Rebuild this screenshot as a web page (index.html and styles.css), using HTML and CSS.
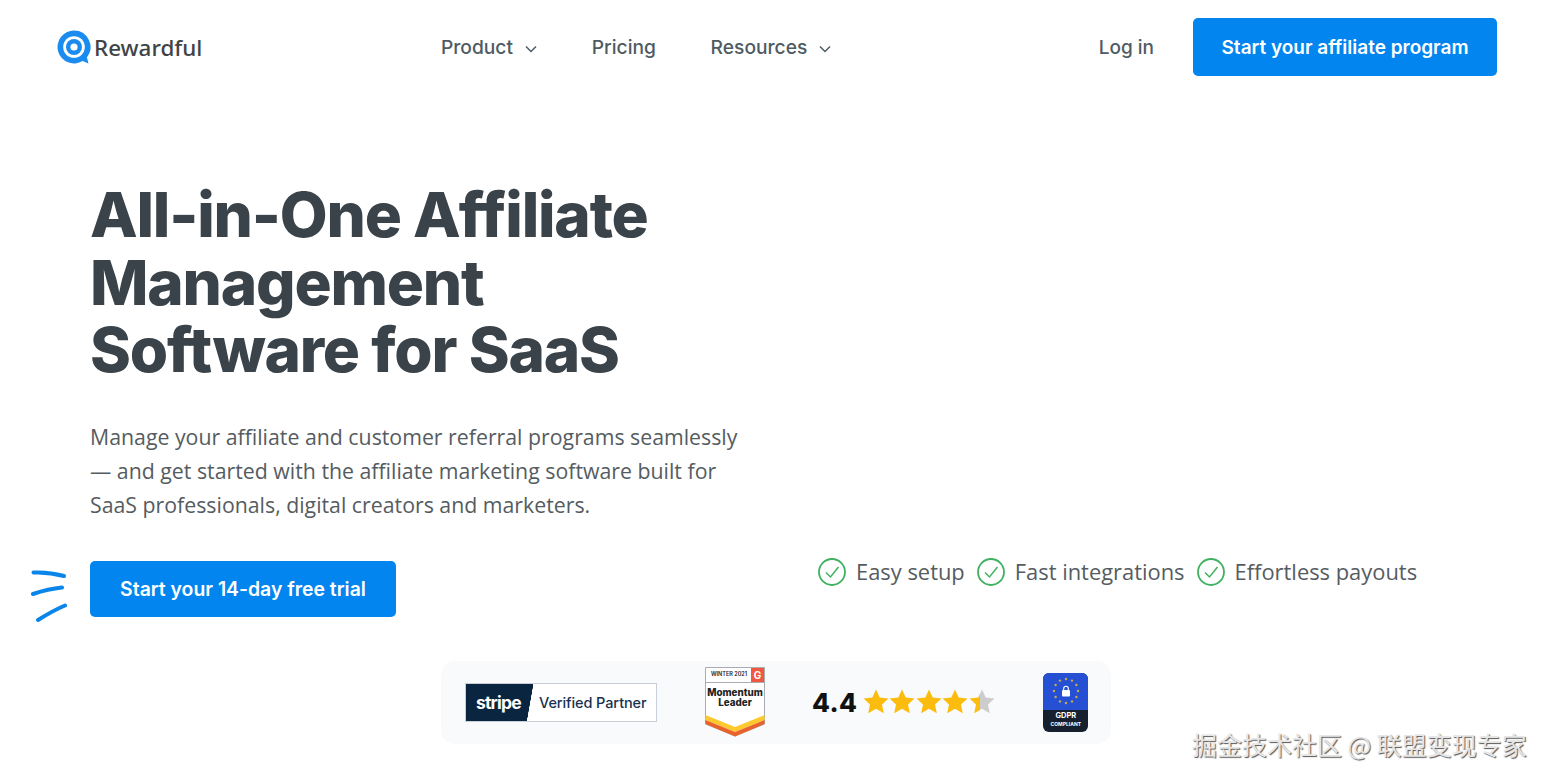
FILE: index.html

```html
<!DOCTYPE html>
<html lang="en">
<head>
  <meta charset="UTF-8" />
  <meta name="viewport" content="width=device-width, initial-scale=1.0" />
  <title>Rewardful</title>
  <link rel="stylesheet" href="styles.css">
</head>
<body>
  <header class="topbar">
    <a class="logo" href="#">
      <svg class="logo-mark" viewBox="0 0 34 34" width="34" height="34">
        <path d="M17 .5a16.5 16.5 0 1 0 8.6 30.6l5.9 2.4-1.6-6.3A16.5 16.5 0 0 0 17 .5z" fill="#1a8cf0"/>
        <circle cx="17" cy="17" r="10.8" fill="#fff"/>
        <circle cx="17" cy="17" r="8" fill="#1a8cf0"/>
        <circle cx="17" cy="17" r="3.6" fill="#fff"/>
      </svg>
      <span>Rewardful</span>
    </a>
    <nav class="mainnav">
      <a href="#">Product <svg class="chev" viewBox="0 0 12 8" width="12" height="8"><path d="M1 1.5l5 5 5-5" fill="none" stroke="#4f5b62" stroke-width="1.5"/></svg></a>
      <a href="#">Pricing</a>
      <a href="#">Resources <svg class="chev" viewBox="0 0 12 8" width="12" height="8"><path d="M1 1.5l5 5 5-5" fill="none" stroke="#4f5b62" stroke-width="1.5"/></svg></a>
    </nav>
    <div class="topbar-right">
      <a class="login" href="#">Log in</a>
      <a class="btn btn-top" href="#">Start your affiliate program</a>
    </div>
  </header>

  <main>
    <section class="hero">
      <h1>All-in-One Affiliate<br>Management<br>Software for SaaS</h1>
      <p class="lead">Manage your affiliate and customer referral programs seamlessly — and get started with the affiliate marketing software built for SaaS professionals, digital creators and marketers.</p>
      <div class="cta-row">
        <div class="cta">
          <svg class="scribble" viewBox="0 0 36 54" width="36" height="54">
            <path d="M2.5 3.5C12 3 24 4.500 33 7M2 25C11 22 21 19.500 31 18.500M7 51C15 46 23 41 34 36.500" fill="none" stroke="#0a85ea" stroke-width="4" stroke-linecap="round"/>
          </svg>
          <a class="btn btn-trial" href="#">Start your 14-day free trial</a>
        </div>
        <ul class="perks">
          <li><svg viewBox="0 0 28 28" width="28" height="28"><circle cx="14" cy="14" r="13" fill="none" stroke="#3fb160" stroke-width="1.800"/><path d="M8 14.500l4.500 4.500 8-10" fill="none" stroke="#3fb160" stroke-width="1.500"/></svg>Easy setup</li>
          <li><svg viewBox="0 0 28 28" width="28" height="28"><circle cx="14" cy="14" r="13" fill="none" stroke="#3fb160" stroke-width="1.800"/><path d="M8 14.500l4.500 4.500 8-10" fill="none" stroke="#3fb160" stroke-width="1.500"/></svg>Fast integrations</li>
          <li><svg viewBox="0 0 28 28" width="28" height="28"><circle cx="14" cy="14" r="13" fill="none" stroke="#3fb160" stroke-width="1.800"/><path d="M8 14.500l4.500 4.500 8-10" fill="none" stroke="#3fb160" stroke-width="1.500"/></svg>Effortless payouts</li>
        </ul>
      </div>
    </section>

    <section class="trust">
      <div class="stripe-badge">
        <span class="stripe-name">stripe</span>
        <span class="stripe-label">Verified Partner</span>
      </div>
      <div class="g2">
        <svg class="g2-shape" viewBox="0 0 60 70" width="60" height="70">
          <path d="M.5.500h59V57L30 69 .5 57z" fill="#fff" stroke="#a9adb3"/>
          <path d="M.5 48L30 60l29.500-12v5L30 65 .5 53z" fill="#fdc92f"/>
          <path d="M.5 53L30 65l29.500-12v4L30 69.500 .5 57z" fill="#e8622c"/>
          <rect x="46" y="1" width="13" height="14" fill="#f0583f"/>
          <path d="M.5 15.500h59" stroke="#a9adb3" fill="none"/>
        </svg>
        <span class="g2-season">WINTER 2021</span>
        <span class="g2-mark">G</span>
        <span class="g2-title">Momentum<br>Leader</span>
      </div>
      <div class="rating">
        <span class="score">4.4</span>
        <svg class="stars" viewBox="0 0 132 26" width="132" height="26">
          <defs>
            <path id="star" d="M13 .5l3.700 8 8.800 1-6.500 6 1.800 8.700L13 19.800l-7.800 4.400L7 15.500l-6.500-6 8.800-1z"/>
            <linearGradient id="partial">
              <stop offset="42%" stop-color="#fcbc0d"/>
              <stop offset="42%" stop-color="#cdcdcd"/>
            </linearGradient>
          </defs>
          <use href="#star" x="0" fill="#fcbc0d"/>
          <use href="#star" x="26" fill="#fcbc0d"/>
          <use href="#star" x="53" fill="#fcbc0d"/>
          <use href="#star" x="79" fill="#fcbc0d"/>
          <use href="#star" x="106" fill="url(#partial)"/>
        </svg>
      </div>
      <div class="gdpr">
        <div class="gdpr-top">
          <svg viewBox="0 0 30 30" width="30" height="30">
            <g fill="#c9a94a">
              <circle cx="15" cy="3" r="1.200"/><circle cx="21" cy="4.600" r="1.200"/><circle cx="25.400" cy="9" r="1.200"/><circle cx="27" cy="15" r="1.200"/><circle cx="25.400" cy="21" r="1.200"/><circle cx="21" cy="25.400" r="1.200"/><circle cx="15" cy="27" r="1.200"/><circle cx="9" cy="25.400" r="1.200"/><circle cx="4.600" cy="21" r="1.200"/><circle cx="3" cy="15" r="1.200"/><circle cx="4.600" cy="9" r="1.200"/><circle cx="9" cy="4.600" r="1.200"/>
            </g>
            <rect x="11" y="14" width="8" height="6.500" rx="1" fill="#fff"/>
            <path d="M12.700 14.500v-2a2.300 2.300 0 0 1 4.600 0v2" fill="none" stroke="#fff" stroke-width="1.100"/>
          </svg>
        </div>
        <div class="gdpr-bottom"><b>GDPR</b><small>COMPLIANT</small></div>
      </div>
    </section>
  </main>

  <div class="watermark">掘金技术社区 @ 联盟变现专家</div>
</body>
</html>
```

FILE: styles.css

```css
body {
  font-family: Inter, 'Noto Sans', sans-serif;
  margin: 0;
  padding: 0;
  background: #fff;
  color: #394349;
  height: 782px;
  overflow: hidden;
  position: relative;
}
a {
  text-decoration: none;
  color: inherit;
}
.topbar {
  display: flex;
  align-items: center;
  height: 58px;
  padding: 18px 53px 0 57px;
}
.logo {
  display: flex;
  align-items: center;
  gap: 3px;
  width: 145px;
  font-family: 'Noto Sans', sans-serif;
  font-size: 22.400px;
  font-weight: 500;
  color: #3f4447;
}
.logo-mark {
  flex: none;
}
.mainnav {
  display: flex;
  gap: 54.700px;
  margin-left: 239px;
  font-size: 19.200px;
  font-weight: 500;
  color: #4f5b62;
}
.chev {
  margin-left: 7px;
  vertical-align: 1px;
}
.topbar-right {
  display: flex;
  align-items: center;
  gap: 39px;
  margin-left: auto;
}
.login {
  font-size: 19px;
  font-weight: 500;
  color: #4f5b62;
}
.btn {
  display: flex;
  align-items: center;
  justify-content: center;
  background: #0285ee;
  color: #fff;
  font-weight: 600;
  border-radius: 5px;
}
.btn-top {
  width: 304px;
  height: 58px;
  font-size: 19px;
}
.hero {
  padding: 105px 0 0 90px;
}
h1 {
  margin: 0;
  font-size: 62px;
  line-height: 67.500px;
  font-weight: 800;
  letter-spacing: -1.200px;
  color: #394349;
}
.lead {
  margin: 36px 0 0;
  width: 655px;
  font-family: 'Open Sans', sans-serif;
  font-size: 21.300px;
  line-height: 34px;
  color: #555c61;
}
.cta-row {
  display: flex;
  margin-top: 39px;
}
.cta {
  position: relative;
}
.scribble {
  position: absolute;
  left: -59px;
  top: 8px;
}
.btn-trial {
  width: 306px;
  height: 56px;
  font-size: 19.400px;
}
.perks {
  display: flex;
  gap: 12px;
  list-style: none;
  margin: -3px 0 0 422px;
  padding: 0;
  height: 28px;
  font-family: 'Open Sans', sans-serif;
  font-size: 21.900px;
  color: #555c61;
}
.perks li {
  display: flex;
  align-items: center;
  gap: 10px;
}
.trust {
  display: flex;
  align-items: center;
  width: 670px;
  height: 83px;
  margin: 44px 0 0 441px;
  box-sizing: border-box;
  padding-left: 24px;
  background: #f8fafc;
  border-radius: 14px;
}
.stripe-badge {
  display: flex;
  align-items: center;
  width: 192px;
  height: 39px;
  box-sizing: border-box;
  border: 1px solid #c9cfd6;
  background: #fff linear-gradient(100deg, #0a2540 0, #0a2540 34.200%, #fff 34.400%);
}
.stripe-name {
  width: 73px;
  padding-left: 10px;
  box-sizing: border-box;
  color: #fff;
  font-size: 17.500px;
  font-weight: 700;
  letter-spacing: -0.8px;
}
.stripe-label {
  font-size: 14.500px;
  font-weight: 500;
  color: #17314f;
  letter-spacing: -0.1px;
}
.g2 {
  position: relative;
  width: 60px;
  height: 70px;
  margin-left: 48px;
  text-align: center;
  color: #222;
}
.g2-shape {
  display: block;
}
.g2-season {
  position: absolute;
  left: 2px;
  top: 4px;
  width: 44px;
  font-size: 5.500px;
  font-weight: 600;
}
.g2-mark {
  position: absolute;
  left: 46px;
  top: 2px;
  width: 13px;
  color: #fff;
  font-size: 10px;
  font-weight: 700;
}
.g2-title {
  position: absolute;
  left: 0;
  top: 21px;
  width: 60px;
  font-size: 9.800px;
  line-height: 10px;
  font-weight: 800;
}
.rating {
  display: flex;
  align-items: center;
  gap: 6px;
  margin-left: 47px;
}
.score {
  font-size: 26px;
  font-weight: 800;
  color: #111;
  letter-spacing: 0.4px;
}
.stars {
  display: block;
}
.gdpr {
  width: 45px;
  height: 59px;
  margin-left: 48px;
  border-radius: 6px;
  overflow: hidden;
  background: #16202f;
  text-align: center;
}
.gdpr-top {
  display: flex;
  align-items: center;
  justify-content: center;
  height: 37px;
  background: #2650d4;
}
.gdpr-bottom {
  display: flex;
  flex-direction: column;
  align-items: center;
  padding-top: 2px;
  color: #fff;
  line-height: 8px;
}
.gdpr-bottom b {
  font-size: 7.500px;
}
.gdpr-bottom small {
  font-size: 5px;
  font-weight: 700;
}
.watermark {
  position: absolute;
  left: 1192px;
  top: 727px;
  font-family: 'Noto Sans CJK SC', sans-serif;
  font-size: 25px;
  line-height: 34px;
  white-space: nowrap;
  color: #e6e6e6;
  text-shadow: 1px 1px 1px #555, -1px -1px 0 #fff;
}
```
